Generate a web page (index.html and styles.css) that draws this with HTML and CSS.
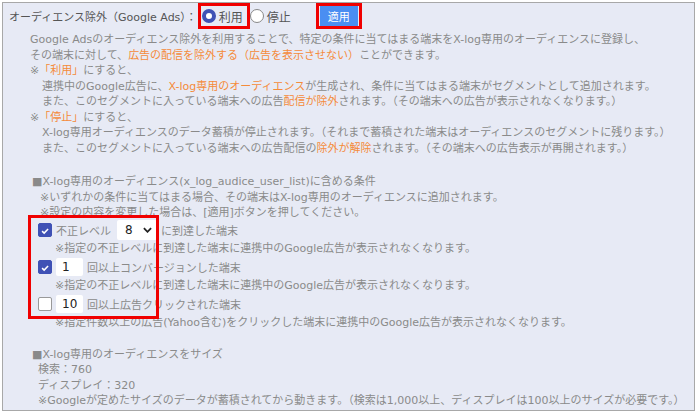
FILE: index.html
```html
<!DOCTYPE html>
<html lang="ja">
<head>
<meta charset="utf-8">
<link rel="stylesheet" href="styles.css">
</head>
<body>
<div class="panel">
  <div class="head">
    <span class="title">オーディエンス除外（Google Ads）：</span>
    <span class="mark mark-radio">
      <span class="radio on"></span><span class="rlabel">利用</span>
    </span>
    <span class="radio"></span><span class="rlabel">停止</span>
    <span class="mark mark-btn"><button class="apply">適用</button></span>
  </div>

  <div class="desc">
    <div class="line">Google Adsのオーディエンス除外を利用することで、特定の条件に当てはまる端末をX-log専用のオーディエンスに登録し、</div>
    <div class="line">その端末に対して、<span class="o">広告の配信を除外する（広告を表示させない）</span>ことができます。</div>
    <div class="line">※<span class="o">「利用」</span>にすると、</div>
    <div class="line sub">連携中のGoogle広告に、<span class="o">X-log専用のオーディエンス</span>が生成され、条件に当てはまる端末がセグメントとして追加されます。</div>
    <div class="line sub">また、このセグメントに入っている端末への広告<span class="o">配信が除外</span>されます。（その端末への広告が表示されなくなります。）</div>
    <div class="line">※<span class="o">「停止」</span>にすると、</div>
    <div class="line sub">X-log専用オーディエンスのデータ蓄積が停止されます。（それまで蓄積された端末はオーディエンスのセグメントに残ります。）</div>
    <div class="line sub">また、このセグメントに入っている端末への広告配信の<span class="o">除外が解除</span>されます。（その端末への広告表示が再開されます。）</div>
  </div>

  <div class="section">
    <div class="line sq">■X-log専用のオーディエンス(x_log_audice_user_list)に含める条件</div>
    <div class="line ind">※いずれかの条件に当てはまる場合、その端末はX-log専用のオーディエンスに追加されます。</div>
    <div class="line ind">※設定の内容を変更した場合は、[適用]ボタンを押してください。</div>

    <div class="conds">
      <div class="row">
        <span class="cb on"><svg viewBox="0 0 14 14" width="14" height="14"><path d="M3.6 7.2 L6 9.4 L10.6 4.6" fill="none" stroke="#fff" stroke-width="1.8"/></svg></span>
        <span class="rt">不正レベル</span>
        <span class="select">8<svg class="chev" viewBox="0 0 10 6" width="9" height="6"><path d="M1 1 L5 5 L9 1" fill="none" stroke="#222" stroke-width="2"/></svg></span>
        <span class="rt">に到達した端末</span>
      </div>
      <div class="line note">※指定の不正レベルに到達した端末に連携中のGoogle広告が表示されなくなります。</div>
      <div class="row">
        <span class="cb on"><svg viewBox="0 0 14 14" width="14" height="14"><path d="M3.6 7.2 L6 9.4 L10.6 4.6" fill="none" stroke="#fff" stroke-width="1.8"/></svg></span>
        <span class="num">1</span>
        <span class="rt">回以上コンバージョンした端末</span>
      </div>
      <div class="line note">※指定の不正レベルに到達した端末に連携中のGoogle広告が表示されなくなります。</div>
      <div class="row">
        <span class="cb"></span>
        <span class="num">10</span>
        <span class="rt">回以上広告クリックされた端末</span>
      </div>
      <div class="line note">※指定件数以上の広告(Yahoo含む)をクリックした端末に連携中のGoogle広告が表示されなくなります。</div>
      <div class="mark-box"></div>
    </div>
  </div>

  <div class="section2">
    <div class="line sq">■X-log専用のオーディエンスをサイズ</div>
    <div class="line ind2">検索：760</div>
    <div class="line ind2">ディスプレイ：320</div>
    <div class="line ind2">※Googleが定めたサイズのデータが蓄積されてから動きます。（検索は1,000以上、ディスプレイは100以上のサイズが必要です。）</div>
  </div>
</div>
</body>
</html>
```

FILE: styles.css
```css
html, body {
  margin: 0;
  padding: 0;
  background: #ffffff;
}

body {
  font-family: "DejaVu Sans", "Noto Sans CJK JP", sans-serif;
  font-size: 11px;
  color: #8a8a8a;
}

.panel {
  margin: 2px 0 0 2px;
  width: 691px;
  height: 407px;
  border: 1px solid #a8a8a8;
  background: #e7eaf5;
  overflow: hidden;
}

.head {
  display: flex;
  align-items: center;
  height: 26px;
  padding-left: 6px;
}

.title {
  font-size: 11px;
  color: #555;
}

.mark {
  border: 3px solid #f00000;
  box-sizing: border-box;
  display: flex;
  align-items: center;
  height: 26px;
}

.mark-radio {
  margin-left: 1px;
  width: 52px;
  padding-left: 1px;
}

.radio {
  width: 14px;
  height: 14px;
  border-radius: 50%;
  border: 1px solid #888;
  background: #fff;
  box-sizing: border-box;
  display: inline-block;
  flex: none;
}

.radio.on {
  border: 4.5px solid #3f51b5;
  background: #fff;
}

.rlabel {
  font-size: 12px;
  color: #555;
  margin-left: 3px;
}

.mark-btn {
  margin-left: 25px;
  width: 46px;
  justify-content: center;
}

.apply {
  border: none;
  background: #4a8ef2;
  color: #fff;
  font-family: "Noto Sans CJK JP", sans-serif;
  font-size: 11px;
  width: 38px;
  height: 20px;
  padding: 0;
}

.desc {
  padding: 3px 0 0 27px;
}

.line {
  height: 15.5px;
  line-height: 15.5px;
  white-space: nowrap;
}

.sub {
  padding-left: 12px;
}

.o {
  color: #f58b3a;
}

.section {
  padding: 18px 0 0 29px;
}

.ind {
  padding-left: 8px;
}

.conds {
  position: relative;
  padding-left: 6px;
  margin-top: -1px;
}

.row {
  display: flex;
  align-items: center;
  height: 21px;
}

.cb {
  width: 14px;
  height: 14px;
  box-sizing: border-box;
  border: 1px solid #999;
  border-radius: 2px;
  background: #fff;
  display: inline-flex;
  flex: none;
}

.cb.on {
  background: #3f51b5;
  border-color: #3f51b5;
}

.rt {
  margin-left: 4px;
}

.select {
  margin-left: 6px;
  width: 40px;
  height: 20px;
  background: #fff;
  border-radius: 2px;
  box-sizing: border-box;
  padding: 0 5px 0 8px;
  display: inline-flex;
  align-items: center;
  justify-content: space-between;
  color: #222;
  font-size: 12px;
}

.num {
  margin-left: 4px;
  width: 27px;
  height: 18px;
  background: #fff;
  border-radius: 2px;
  box-sizing: border-box;
  padding-left: 6px;
  display: inline-flex;
  align-items: center;
  color: #222;
  font-size: 12px;
}

.note {
  padding-left: 17px;
  height: 16px;
  line-height: 16px;
}

.mark-box {
  position: absolute;
  left: -4px;
  top: -5px;
  width: 131px;
  height: 104px;
  border: 3px solid #f00000;
  box-sizing: border-box;
}

.section2 {
  padding: 16px 0 0 29px;
}

.ind2 {
  padding-left: 6px;
}
```
